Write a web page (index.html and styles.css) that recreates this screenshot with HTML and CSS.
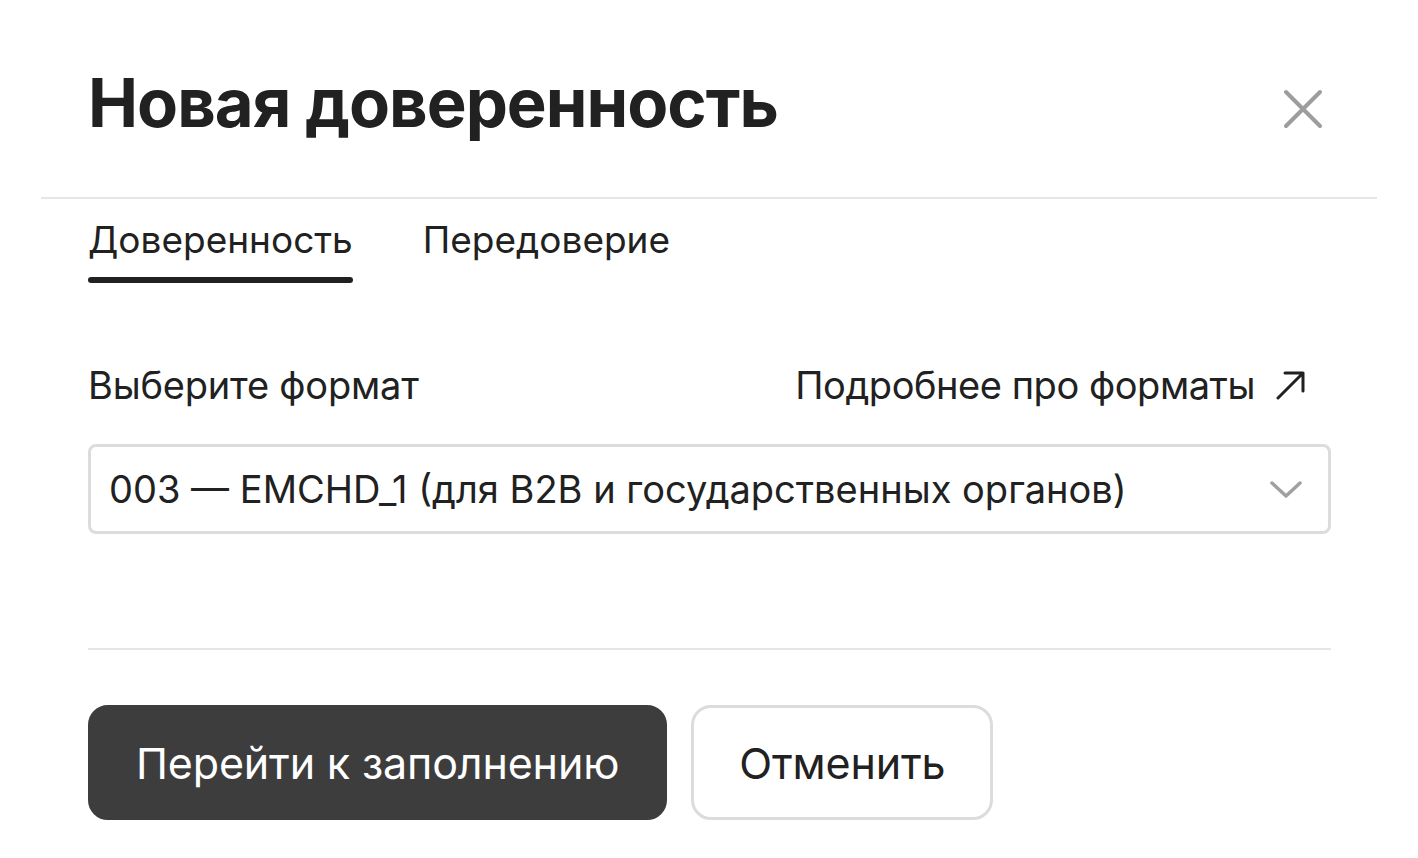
FILE: index.html
```html
<!DOCTYPE html>
<html lang="ru">
<head>
<meta charset="utf-8">
<title>Новая доверенность</title>
<link rel="stylesheet" href="styles.css">
</head>
<body>
<div class="modal">
  <header class="modal-header">
    <h1 class="title">Новая доверенность</h1>
    <button class="close" aria-label="Закрыть">
      <svg width="40" height="40" viewBox="0 0 40 40"><path d="M3 3 L37 37 M37 3 L3 37" stroke="#9d9d9d" stroke-width="4" stroke-linecap="round" fill="none"/></svg>
    </button>
  </header>
  <div class="modal-body">
    <nav class="tabs">
      <div class="tab active">Доверенность</div>
      <div class="tab">Передоверие</div>
    </nav>
    <div class="field-head">
      <span class="label">Выберите формат</span>
      <a class="link">Подробнее про форматы
        <svg width="30" height="30" viewBox="0 0 30 30"><path d="M2 28 L27 3 M9 3 L27 3 L27 21" stroke="#212121" stroke-width="3" stroke-linecap="round" stroke-linejoin="round" fill="none"/></svg>
      </a>
    </div>
    <div class="select">
      <span class="select-value">003 — EMCHD_1 (для B2B и государственных органов)</span>
      <svg width="32" height="18" viewBox="0 0 32 18"><path d="M2 3 L16 16 L30 3" stroke="#a0a0a0" stroke-width="3.5" stroke-linecap="round" stroke-linejoin="round" fill="none"/></svg>
    </div>
    <div class="footer">
      <button class="btn btn-primary">Перейти к заполнению</button>
      <button class="btn btn-secondary">Отменить</button>
    </div>
  </div>
</div>
</body>
</html>
```
FILE: styles.css
```css
* { box-sizing: border-box; }
html, body { margin: 0; background: #fff; }
body {
  font-family: Inter, Roboto, "Liberation Sans", sans-serif;
  color: #212121;
}
.modal {
  margin-left: 41px;
  width: 1336px;
}
.modal-header {
  display: flex;
  align-items: flex-start;
  justify-content: space-between;
  padding: 63px 54px 54px 47px;
  border-bottom: 2px solid #e6e6e6;
}
.title {
  margin: 0;
  font-size: 67px;
  line-height: 80px;
  font-weight: 700;
  letter-spacing: -1px;
  color: #212121;
}
.close {
  margin-top: 26px;
  background: none;
  border: 0;
  padding: 0;
  display: flex;
}
.modal-body {
  padding: 0 46px 0 47px;
}
.tabs {
  display: flex;
  gap: 70px;
  padding-top: 18px;
}
.tab {
  position: relative;
  font-size: 37px;
  line-height: 45px;
  padding-bottom: 21px;
}
.tab.active::after {
  content: "";
  position: absolute;
  left: 0;
  right: 0;
  bottom: 0;
  height: 6px;
  border-radius: 3px;
  background: #212121;
}
.field-head {
  display: flex;
  justify-content: space-between;
  align-items: center;
  margin-top: 79px;
  padding-right: 25px;
  font-size: 38px;
  line-height: 46px;
}
.label {
  letter-spacing: -0.2px;
}
.link {
  display: flex;
  align-items: center;
  gap: 21px;
  letter-spacing: -0.45px;
}
.select {
  margin-top: 36px;
  height: 90px;
  border: 3px solid #dcdcdc;
  border-radius: 8px;
  display: flex;
  align-items: center;
  justify-content: space-between;
  padding: 0 26px 0 18px;
  font-size: 38px;
  line-height: 46px;
}
.footer {
  margin-top: 114px;
  border-top: 2px solid #e6e6e6;
  padding-top: 55px;
  display: flex;
  gap: 24px;
}
.btn {
  height: 115px;
  border-radius: 20px;
  font-family: inherit;
  font-size: 43px;
  padding: 0 45px;
  border: 3px solid transparent;
  letter-spacing: -0.15px;
}
.btn-primary {
  background: #3d3d3d;
  border-color: #3d3d3d;
  color: #fff;
}
.btn-secondary {
  background: #fff;
  color: #212121;
  border-color: #dcdcdc;
}
```
